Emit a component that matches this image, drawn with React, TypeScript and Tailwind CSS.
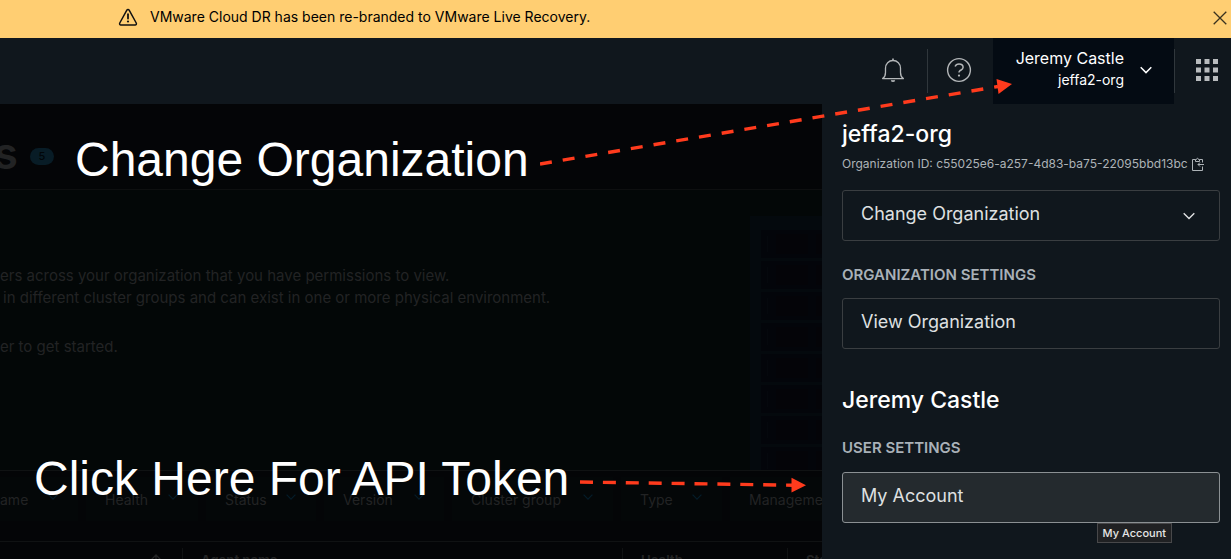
import React from "react";

const filters = [
  { label: "ame", width: "w-[78px] pl-0" },
  { label: "Health", width: "w-28 pl-[19px]" },
  { label: "Status", width: "w-[110px] pl-[19px]" },
  { label: "Version", width: "w-[120px] pl-[19px]" },
  { label: "Cluster group", width: "w-[161px] pl-[19px]" },
  { label: "Type", width: "w-[101px] pl-[19px]" },
  { label: "Management", width: "w-[150px] pl-[19px]" },
];

const rackSlots = [0, 1, 2, 3, 4, 5, 6, 7];

function Chevron({ className }: { className: string }) {
  return (
    <svg className={className} viewBox="0 0 12 8" fill="none" stroke="currentColor" aria-hidden="true">
      <path d="M0.7 1.2 6 6.6 11.3 1.2" />
    </svg>
  );
}

function Banner() {
  return (
    <div className="flex h-[38px] shrink-0 items-center bg-[#ffce72] pl-[118px] pr-1 text-black">
      <svg className="mb-1 h-5 w-5 shrink-0" viewBox="0 0 20 20" fill="none" stroke="#111" strokeWidth="1.5" aria-hidden="true">
        <path d="M10 2.4c.5 0 .9.25 1.15.7l7.1 12.9c.5.9-.1 1.9-1.1 1.9H2.85c-1 0-1.6-1-1.1-1.9L8.85 3.100c.25-.45.65-.7 1.15-.7Z" strokeLinejoin="round" />
        <path d="M10 7.200v4.400" strokeWidth="1.8" strokeLinecap="round" />
        <circle cx="10" cy="14.500" r="1.100" fill="#111" stroke="none" />
      </svg>
      <p className="ml-3 flex-1 pb-1 text-[14px] leading-5">
        VMware Cloud DR has been re-branded to VMware Live Recovery.
      </p>
      <button type="button" aria-label="Close" className="mb-0.5 flex h-4 w-3.5 items-center justify-center">
        <svg className="h-3.5 w-3.5" viewBox="0 0 14 14" stroke="#3a321f" strokeWidth="1.3" aria-hidden="true">
          <path d="M.7.7 13.3 13.3M13.3.7.7 13.3" />
        </svg>
      </button>
    </div>
  );
}

function Header() {
  return (
    <header className="flex h-[66px] shrink-0 items-center justify-end bg-[#10171d]">
      <button type="button" aria-label="Notifications" className="flex h-full w-[68px] items-center justify-center pb-0.5 text-[#b3b6b8]">
        <svg className="h-6 w-6" viewBox="0 0 24 24" fill="none" stroke="currentColor" strokeWidth="1.3" strokeLinejoin="round" aria-hidden="true">
          <path d="M12 .4v2.2" strokeWidth="1.6" />
          <path d="M1.6 20.6c1.8-1.3 2.9-3.2 2.9-6.2v-4.2C4.500 5.800 7.700 2.500 12 2.500s7.500 3.300 7.500 7.700v4.200c0 3 1.100 4.900 2.900 6.200Z" />
          <path d="M10.300 22.300c.9.8 2.500.8 3.400 0" strokeWidth="1.700" />
        </svg>
      </button>
      <div className="h-11 w-px bg-[#30373c]" />
      <button type="button" aria-label="Help" className="flex h-full w-[65px] items-center justify-center pb-0.5 pr-1 text-[#b3b6b8]">
        <svg className="h-[26px] w-[26px]" viewBox="0 0 26 26" fill="none" stroke="currentColor" strokeWidth="1.4" aria-hidden="true">
          <circle cx="13" cy="13" r="11.400" />
          <path d="M9.100 9.600C9.700 7.900 11.200 7 13 7c2.300 0 4.100 1.300 4.100 3.300 0 2.200-2 2.600-3.300 3.500-.6.4-.8.9-.8 1.800" strokeWidth="1.500" />
          <circle cx="13" cy="18.600" r="1.100" fill="currentColor" stroke="none" />
        </svg>
      </button>
      <button type="button" className="flex h-full w-[181px] items-center justify-end gap-4 bg-[#040b13] pb-1.5 pr-[22px] text-right text-white">
        <span className="flex flex-col">
          <span className="text-[16px] leading-6">Jeremy Castle</span>
          <span className="text-[14px] leading-5">jeffa2-org</span>
        </span>
        <Chevron className="mt-1 h-2 w-3 stroke-[1.5]" />
      </button>
      <div className="h-11 w-px bg-[#30373c]" />
      <button type="button" aria-label="Applications" className="flex h-full w-14 items-center justify-end pb-0.5 pr-[13px] text-[#b9bcbe]">
        <svg className="h-[22px] w-[22px]" viewBox="0 0 22 22" fill="currentColor" aria-hidden="true">
          <path d="M0 0h5v5H0zM8.500 0h5v5h-5zM17 0h5v5h-5zM0 8.500h5v5H0zM8.500 8.500h5v5h-5zM17 8.500h5v5h-5zM0 17h5v5H0zM8.500 17h5v5h-5zM17 17h5v5h-5z" />
        </svg>
      </button>
    </header>
  );
}

function DimmedPage() {
  return (
    <main className="flex min-w-0 flex-1 flex-col overflow-hidden bg-[#040507] text-[#222324]">
      <div className="flex h-[85px] shrink-0 items-center gap-3 pt-5">
        <h1 className="flex w-[18px] justify-end pb-2 text-[44px] font-semibold leading-[44px]">s</h1>
        <span className="flex h-[17px] w-6 items-center justify-center rounded-full bg-[#081c26] text-[11px] font-medium text-[#010609]">5</span>
      </div>
      <section className="flex h-[281px] shrink-0 justify-between border-t border-[#0e0f10] bg-[#030707]">
        <div className="whitespace-nowrap pt-[75px] text-[15px] leading-[22px]">
          <p>ers across your organization that you have permissions to view.</p>
          <p className="pl-[3px]">in different cluster groups and can exist in one or more physical environment.</p>
          <p className="mt-[27px]">er to get started.</p>
        </div>
        <div className="mt-[26px] flex w-[72px] shrink-0 flex-col gap-[3px] overflow-hidden bg-[#04090d] pl-[11px] pt-3.5">
          {rackSlots.map((slot) => (
            <div key={slot} className="flex h-7 shrink-0 items-center gap-2 bg-[#03050a] pl-1.5">
              <div className="h-4 w-px bg-[#05080d]" />
              <div className="h-5 w-8 bg-[#040408]" />
              <div className="h-5 flex-1 bg-[#040408]" />
            </div>
          ))}
        </div>
      </section>
      <div className="flex h-[71px] shrink-0 gap-2 overflow-hidden border-t border-[#101213] pt-1.5">
        {filters.map((filter) => (
          <button
            key={filter.label}
            type="button"
            className={`flex h-11 shrink-0 items-center justify-between overflow-hidden bg-[#040708] pr-5 text-[14px] ${filter.width}`}
          >
            <span className="whitespace-nowrap">{filter.label}</span>
            <Chevron className="mb-1 h-2 w-2.5 shrink-0 stroke-[1.5] text-[#051c29]" />
          </button>
        ))}
      </div>
      <table className="w-full shrink-0 table-fixed border-t border-[#101213] text-left text-[13px] font-semibold leading-4">
        <thead>
          <tr className="h-10 align-top">
            <th className="w-[183px] pt-1.5">
              <div className="flex h-8 justify-end border-r border-[#101213] pr-5 pt-1.5">
                <svg className="h-3 w-3" viewBox="0 0 12 12" fill="none" stroke="currentColor" strokeWidth="1.300" aria-label="Sorted ascending">
                  <path d="M6 12V1M1 6l5-5 5 5" />
                </svg>
              </div>
            </th>
            <th className="w-[440px] pt-1.5"><div className="h-8 border-r border-[#101213] pl-[18px] pt-1">Agent name</div></th>
            <th className="w-[165px] pt-1.5"><div className="h-8 border-r border-[#101213] pl-[18px] pt-1">Health</div></th>
            <th className="pt-1.5"><div className="h-8 overflow-hidden pl-[18px] pt-1">Status</div></th>
          </tr>
        </thead>
      </table>
    </main>
  );
}

function AccountPanel() {
  const option = "flex h-[51px] w-full items-center justify-between rounded-[3px] border pb-1 pl-[18px] pr-6 text-left text-[18px] text-[#dfe0e1]";
  const heading = "mt-6 text-[15px] font-semibold leading-5 text-[#a9b1b8]";
  return (
    <aside className="w-[409px] shrink-0 bg-[#10171d] pl-5 pr-[11px] pt-4">
      <h2 className="text-[23px] font-medium leading-7 text-white">jeffa2-org</h2>
      <div className="mt-2 flex h-4 items-center gap-1 text-[12px] leading-4 text-[#adb3b7]">
        <p className="whitespace-nowrap">Organization ID: c55025e6-a257-4d83-ba75-22095bbd13bc</p>
        <button type="button" aria-label="Copy organization ID">
          <svg className="h-3.5 w-3" viewBox="0 0 12 14" fill="none" stroke="currentColor" aria-hidden="true">
            <path d="M3.500 2.500H.5v11h10V9.500M10.500 5.500v-3h-3" />
            <path d="M3.500 4.500v-2h1C4.500.9 6.500.9 6.500 2.500h1v2ZM12 7.500H6M8 5.500l-2 2 2 2" />
          </svg>
        </button>
      </div>
      <button type="button" className={`${option} mt-[18px] border-[#3a3e41]`}>
        Change Organization
        <Chevron className="mt-1 h-2 w-3 stroke-[1.4]" />
      </button>
      <h3 className={heading}>ORGANIZATION SETTINGS</h3>
      <button type="button" className={`${option} mt-[13px] border-[#3a3e41]`}>View Organization</button>
      <h2 className="mt-[37px] text-[23px] font-medium leading-7 text-white">Jeremy Castle</h2>
      <h3 className={heading}>USER SETTINGS</h3>
      <div className="relative mt-3.5">
        <button type="button" className={`${option} border-[#8b9093] bg-[#242a2e]`}>My Account</button>
        <span role="tooltip" className="absolute right-12 top-full flex h-5 items-center border border-[#48484a] bg-[#202123] px-[5px] text-[11px] font-medium text-[#e6e6e6]">
          My Account
        </span>
      </div>
    </aside>
  );
}

function Annotations() {
  const label = "absolute whitespace-nowrap font-['Liberation_Sans',Arial,sans-serif] text-[48px] leading-[56px] text-white";
  return (
    <div className="pointer-events-none absolute inset-0">
      <p className={`${label} left-[75px] top-[132px]`}>Change Organization</p>
      <p className={`${label} left-[34px] top-[451px]`}>Click Here For API Token</p>
      <svg className="absolute left-[540px] top-[74px] h-[94px] w-[474px]" viewBox="540 74 474 94" aria-hidden="true">
        <path d="M540 164 998 86.500" stroke="#ff3b1d" strokeWidth="3.400" strokeDasharray="12 11.030" fill="none" />
        <path d="m996.500 79 15.500 5-13.500 10Z" fill="#ff3b1d" />
      </svg>
      <svg className="absolute left-[580px] top-[474px] h-[22px] w-[228px]" viewBox="580 474 228 22" aria-hidden="true">
        <path d="M580 482 793 485.200" stroke="#ff3b1d" strokeWidth="3.400" strokeDasharray="13 9.900" fill="none" />
        <path d="M791.500 477.700 806 485.300l-14.500 7.200Z" fill="#ff3b1d" />
      </svg>
    </div>
  );
}

export default function App() {
  return (
    <div className="relative flex h-screen flex-col overflow-hidden bg-[#10171d] font-['Inter',sans-serif]">
      <Banner />
      <Header />
      <div className="flex min-h-0 flex-1">
        <DimmedPage />
        <AccountPanel />
      </div>
      <Annotations />
    </div>
  );
}
